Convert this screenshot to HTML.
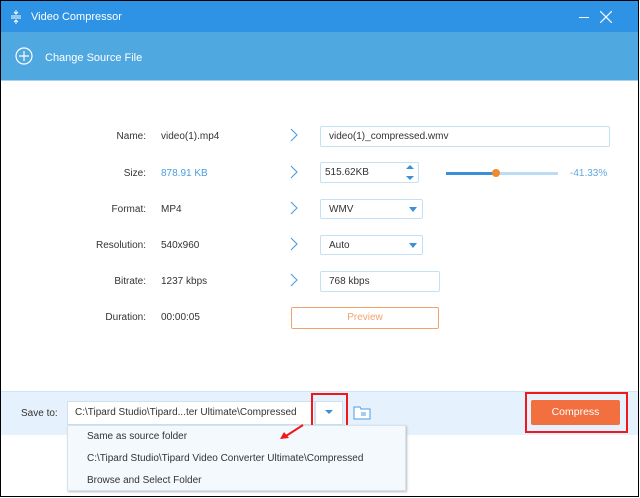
<!DOCTYPE html>
<html><head><style>
*{margin:0;padding:0;box-sizing:border-box}
body{width:640px;height:498px;background:#fff;font-family:"Liberation Sans",sans-serif;font-size:10px;color:#333;position:relative;overflow:hidden}
.win{position:absolute;left:0;top:0;width:639px;height:497px;border:1px solid #000;overflow:hidden}
.title{position:absolute;left:0;top:0;width:100%;height:31px;background:#2e93e5;color:#fff;font-size:11px}
.tool{position:absolute;left:0;top:31px;width:100%;height:49px;background:#4fa8e0;color:#fff;font-size:11px;border-bottom:1px solid #a9d2ef}
.abs{position:absolute}
.lbl{position:absolute;width:145px;text-align:right;font-size:10px;color:#333}
.val{position:absolute;left:160px;font-size:10px;color:#333}
.arr{position:absolute;left:288px}
.box{position:absolute;border:1px solid #c4e0f5;border-radius:2px;background:#fff;font-size:10px;padding-left:8px;color:#333}
.tri{position:absolute;width:0;height:0;border-left:4px solid transparent;border-right:4px solid transparent;border-top:5px solid #3a8fd8}
</style></head><body>
<div class="win">
<div class="title">
 <svg class="abs" style="left:9px;top:9px" width="12" height="14" viewBox="0 0 12 14"><path d="M6 0v4M6 10v4M4 2l2 2 2-2M4 12l2-2 2 2M1 6h10M1 8h10" stroke="#fff" stroke-width="1" fill="none"/></svg>
 <div class="abs" style="left:30px;top:10px">Video Compressor</div>
 <div class="abs" style="left:578px;top:16px;width:10px;height:1px;background:#fff"></div>
 <svg class="abs" style="left:599px;top:10px" width="12" height="12"><path d="M0 0L12 12M12 0L0 12" stroke="#fff" stroke-width="1.2"/></svg>
</div>
<div class="tool">
 <svg class="abs" style="left:14px;top:15px" width="18" height="18"><circle cx="9" cy="9" r="8" stroke="#fff" fill="none" stroke-width="1.2"/><path d="M9 4v10M4 9h10" stroke="#fff" stroke-width="1.2"/></svg>
 <div class="abs" style="left:44px;top:20px">Change Source File</div>
</div>

<div class="lbl" style="top:130px">Name:</div><div class="val" style="top:130px">video(1).mp4</div>
<div class="lbl" style="top:167px">Size:</div><div class="val" style="top:167px;color:#4a9ee0">878.91 KB</div>
<div class="lbl" style="top:203px">Format:</div><div class="val" style="top:203px">MP4</div>
<div class="lbl" style="top:239px">Resolution:</div><div class="val" style="top:239px">540x960</div>
<div class="lbl" style="top:275px">Bitrate:</div><div class="val" style="top:275px">1237 kbps</div>
<div class="lbl" style="top:311px">Duration:</div><div class="val" style="top:311px">00:00:05</div>

<svg class="arr" style="top:127px" width="10" height="14"><path d="M2 1l6 6-6 6" stroke="#4a9ee0" fill="none" stroke-width="1.1"/></svg>
<svg class="arr" style="top:164px" width="10" height="14"><path d="M2 1l6 6-6 6" stroke="#4a9ee0" fill="none" stroke-width="1.1"/></svg>
<svg class="arr" style="top:200px" width="10" height="14"><path d="M2 1l6 6-6 6" stroke="#4a9ee0" fill="none" stroke-width="1.1"/></svg>
<svg class="arr" style="top:236px" width="10" height="14"><path d="M2 1l6 6-6 6" stroke="#4a9ee0" fill="none" stroke-width="1.1"/></svg>
<svg class="arr" style="top:272px" width="10" height="14"><path d="M2 1l6 6-6 6" stroke="#4a9ee0" fill="none" stroke-width="1.1"/></svg>

<div class="box" style="left:319px;top:125px;width:290px;height:21px;line-height:19px">video(1)_compressed.wmv</div>
<div class="box" style="left:319px;top:161px;width:99px;height:21px;line-height:20px;padding-left:4px">515.62KB</div>
<div class="tri" style="left:405px;top:164px;border-top:none;border-bottom:4px solid #3a8fd8"></div>
<div class="tri" style="left:405px;top:175px;border-top-width:4px"></div>
<div class="abs" style="left:445px;top:171px;width:50px;height:3px;background:#3a8fd8"></div>
<div class="abs" style="left:495px;top:171px;width:62px;height:3px;background:#bcdcf5"></div>
<div class="abs" style="left:491px;top:168px;width:8px;height:8px;border-radius:50%;background:#f28a2c"></div>
<div class="abs" style="left:569px;top:167px;color:#5fa8e3">-41.33%</div>
<div class="box" style="left:319px;top:198px;width:103px;height:20px;line-height:20px">WMV</div>
<div class="tri" style="left:408px;top:206px"></div>
<div class="box" style="left:319px;top:234px;width:103px;height:20px;line-height:20px">Auto</div>
<div class="tri" style="left:408px;top:242px"></div>
<div class="box" style="left:319px;top:270px;width:120px;height:21px;line-height:19px">768 kbps</div>
<div class="abs" style="left:290px;top:306px;width:148px;height:22px;border:1px solid #f0a36d;border-radius:2px;color:#f3a46f;text-align:center;line-height:20px">Preview</div>

<div class="abs" style="left:0;top:390px;width:100%;height:44px;background:#e5f1fc;border-top:1px solid #cfe4f6"></div>
<div class="abs" style="left:20px;top:407px">Save to:</div>
<div class="abs" style="left:66px;top:400px;width:248px;height:24px;background:#fff;border:1px solid #cfe0ef;line-height:22px;padding-left:7px">C:\Tipard Studio\Tipard...ter Ultimate\Compressed</div>
<div class="abs" style="left:314px;top:400px;width:28px;height:24px;background:#fff;border:1px solid #cfe0ef"></div>
<div class="tri" style="left:324px;top:409px;border-top-width:4px"></div>
<div class="abs" style="left:310px;top:392px;width:37px;height:37px;border:2px solid #f01818"></div>
<svg class="abs" style="left:352px;top:403px" width="18" height="16"><path d="M1 3h6l1 2h9v10H1z" fill="#fff" stroke="#4a9ee0" stroke-width="1"/><path d="M8 9h5M8 11h5" stroke="#4a9ee0"/></svg>
<div class="abs" style="left:524px;top:391px;width:103px;height:41px;border:2px solid #f01818"></div>
<div class="abs" style="left:530px;top:399px;width:89px;height:25px;background:#f26f3f;border-radius:2px;color:#fff;text-align:center;line-height:25px;font-size:10.5px">Compress</div>

<div class="abs" style="left:66px;top:424px;width:339px;height:66px;background:#f4f9fe;border:1px solid #d5e3ef;box-shadow:1px 1px 2px #bbb"></div>
<div class="abs" style="left:86px;top:430px">Same as source folder</div>
<div class="abs" style="left:86px;top:452px">C:\Tipard Studio\Tipard Video Converter Ultimate\Compressed</div>
<div class="abs" style="left:86px;top:474px">Browse and Select Folder</div>
<svg class="abs" style="left:275px;top:421px" width="30" height="20"><path d="M27 3L10 14" stroke="#f01818" stroke-width="2"/><path d="M4 17l9-1-5-6z" fill="#f01818"/></svg>
</div>
</body></html>
